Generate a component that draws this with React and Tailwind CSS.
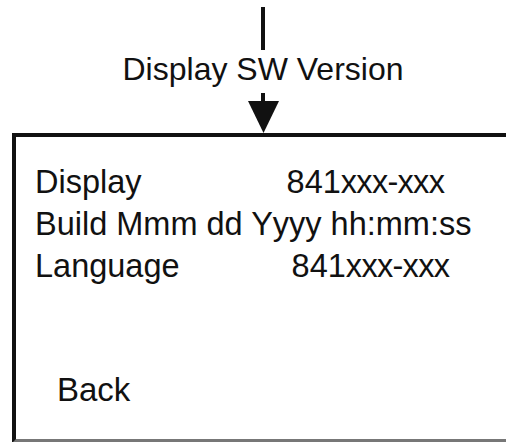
export default function App() {
  const font = { fontFamily: '"Liberation Sans", Arial, sans-serif' };
  return (
    <div className="w-[506px] h-[442px] overflow-hidden bg-white text-[#111]" style={font}>
      <div className="w-[526px] flex flex-col items-center">
        <div className="mt-[7px] w-[4px] h-[43px] bg-[#111]" />
        <div className="mt-[1px] text-[32px] leading-[36px] whitespace-nowrap">Display SW Version</div>
        <div className="mt-[6px] w-[4px] h-[8px] bg-[#111]" />
        <svg width="31" height="32" viewBox="0 0 31 32" className="block">
          <polygon points="0,0 31,0 15.5,32" fill="#111" />
        </svg>
        <div className="self-stretch mx-[12px] h-[310px] border-4 border-[#111] border-b-[#777] pt-[24px] pl-[19px] text-[32.5px] leading-[42px] whitespace-nowrap">
          <div className="flex">
            <span>Display</span>
            <span className="ml-[145px]">
              841<span className="tracking-[-0.7px]">xxx-xxx</span>
            </span>
          </div>
          <div>Build Mmm dd Yyyy hh:mm:ss</div>
          <div className="flex">
            <span>Language</span>
            <span className="ml-[112px]">
              841<span className="tracking-[-0.7px]">xxx-xxx</span>
            </span>
          </div>
          <div className="mt-[82px] pl-[22px] text-[33px]">Back</div>
        </div>
      </div>
    </div>
  );
}
